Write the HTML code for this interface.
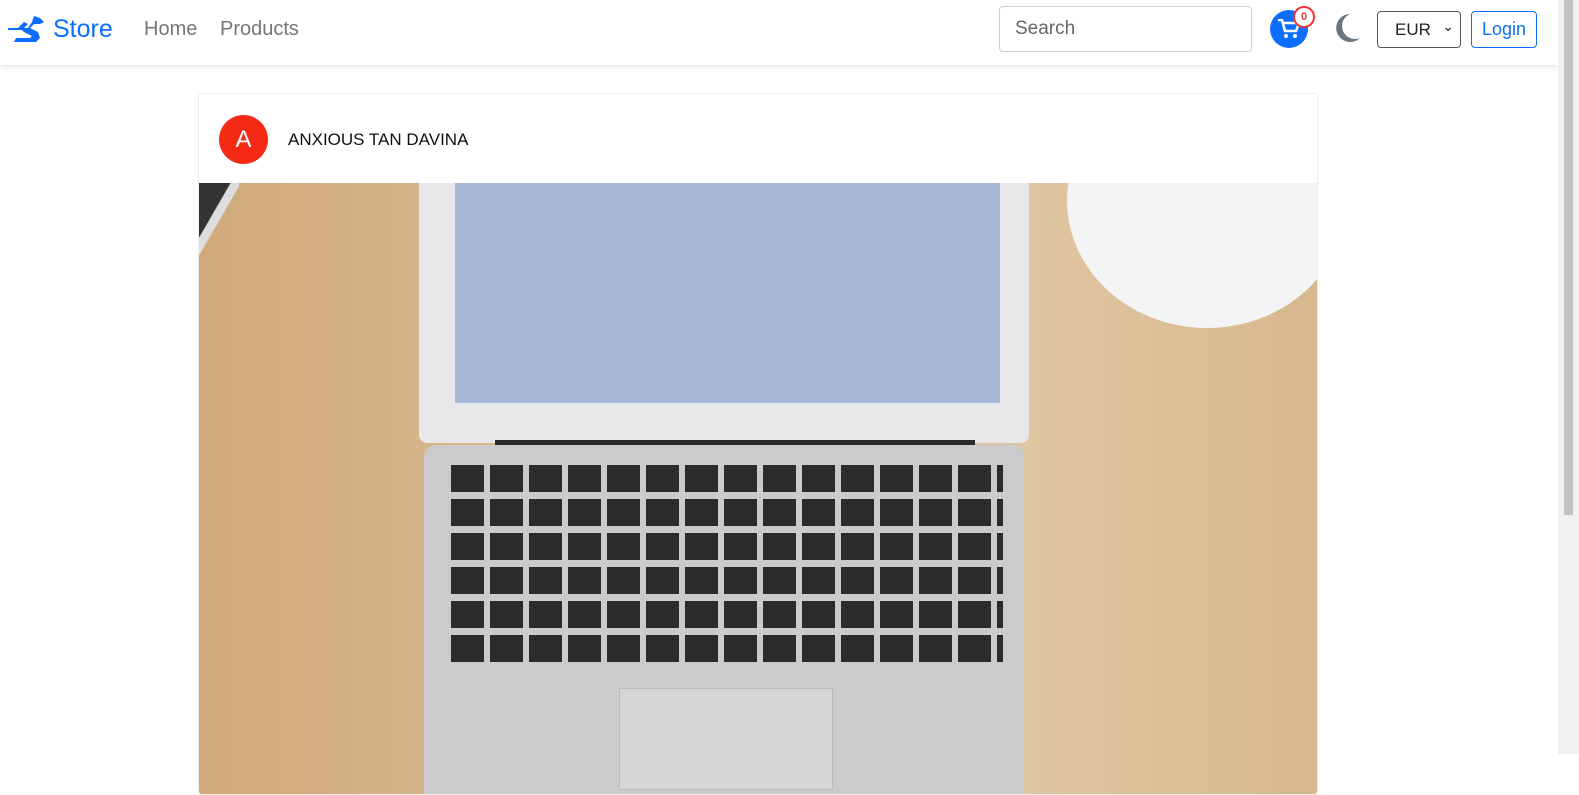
<!DOCTYPE html>
<html><head><style>
body{margin:0;width:1579px;height:754px;overflow:hidden;background:#fff;font-family:"Liberation Sans",sans-serif;position:relative}
.nav{position:absolute;left:0;top:0;width:1558px;height:65px;background:#fff;box-shadow:0 2px 4px rgba(0,0,0,.1)}
.sb{position:absolute;right:0;top:0;width:21px;height:754px;background:#f1f1f1}
.sb div{position:absolute;left:6px;top:0;width:9px;height:515px;background:#c1c1c1}
.brand{position:absolute;left:53px;top:15px;font-size:25px;color:#0d6efd}
.link{position:absolute;top:18px;font-size:20px;color:#777}
.search{position:absolute;left:999px;top:6px;width:253px;height:46px;border:1px solid #ccc;border-radius:4px;box-sizing:border-box;padding:11px 15px;font-size:19px;color:#666}
.cart{position:absolute;left:1270px;top:10px;width:38px;height:38px;border-radius:50%;background:#0d6efd}
.badge{position:absolute;left:1293px;top:6px;width:18px;height:18px;border-radius:50%;border:2px solid #e33;background:#fff;color:#e33;font-size:11px;text-align:center;line-height:18px;font-weight:bold}
.sel{position:absolute;left:1377px;top:11px;width:84px;height:37px;border:1px solid #555;border-radius:4px;box-sizing:border-box;font-size:17px;padding:8px 0 0 17px;color:#222}
.login{position:absolute;left:1471px;top:11px;width:66px;height:37px;border:1px solid #0d6efd;border-radius:4px;box-sizing:border-box;color:#0d6efd;font-size:18px;text-align:center;line-height:35px}
.card{position:absolute;left:198px;top:93px;width:1118px;height:700px;border:1px solid #eee;border-radius:4px;overflow:hidden}
.av{position:absolute;left:20px;top:21px;width:49px;height:49px;border-radius:50%;background:#f42a14;color:#fff;font-size:24px;text-align:center;line-height:49px}
.name{position:absolute;left:89px;top:36px;font-size:17px;color:#111}
.img{position:absolute;left:0;top:89px;width:1118px;height:620px;overflow:hidden;background:linear-gradient(90deg,#cfa97a,#dcbf98 40%,#e0c7a4 70%,#d8b88e)}
</style></head><body>
<div class="nav">
<svg style="position:absolute;left:8px;top:14px" width="40" height="30" viewBox="0 0 40 30"><path d="M0 14h10l6-6 4 2-4 4h4l4-6 2-6 6 2 4 4-4 2h-6l-4 4 8 4 2 6-4 4H6l2-4h14l2-2-8-4-2-2H0z" fill="#0d6efd"/></svg>
<div class="brand">Store</div>
<div class="link" style="left:144px">Home</div>
<div class="link" style="left:220px">Products</div>
<div class="search">Search</div>
<div class="cart"><svg style="position:absolute;left:8px;top:9px" width="22" height="20" viewBox="0 0 22 20"><path d="M0 1h4l3 11h11l3-8H6" fill="none" stroke="#fff" stroke-width="2.5"/><circle cx="8" cy="17" r="2" fill="#fff"/><circle cx="17" cy="17" r="2" fill="#fff"/></svg></div>
<div class="badge">0</div>
<svg style="position:absolute;left:1330px;top:12px" width="32" height="32" viewBox="0 0 32 32"><path d="M20 2A14 14 0 1 0 30 26 12 12 0 0 1 20 2z" fill="#6c757d"/></svg>
<div class="sel">EUR<span style="position:absolute;right:6px;top:6px;font-size:14px">&#8964;</span></div>
<div class="login">Login</div>
</div>
<div class="sb"><div></div></div>
<div class="card">
<div class="av">A</div><div class="name">ANXIOUS TAN DAVINA</div>
<div class="img">
<div style="position:absolute;left:0;top:0;width:40px;height:110px;background:linear-gradient(120deg,#333 30%,#ddd 31%,#ddd 40%,transparent 41%)"></div>
<div style="position:absolute;left:868px;top:-110px;width:280px;height:255px;border-radius:50%;background:#f4f4f4"></div>
<div style="position:absolute;left:220px;top:0;width:610px;height:260px;background:#e8e8ea;border-radius:0 0 8px 8px"></div>
<div style="position:absolute;left:256px;top:0;width:545px;height:220px;background:#a9b8d6"></div>
<div style="position:absolute;left:296px;top:257px;width:480px;height:20px;background:#2a2a2a"></div>
<div style="position:absolute;left:225px;top:262px;width:600px;height:370px;background:#cbcbcd;border-radius:12px"></div>
<div style="position:absolute;left:252px;top:282px;width:552px;height:200px;background:repeating-linear-gradient(90deg,#2b2b2b 0 33px,#cbcbcd 33px 39px);-webkit-mask:repeating-linear-gradient(#000 0 27px,transparent 27px 34px)"></div>
<div style="position:absolute;left:420px;top:505px;width:212px;height:100px;background:#d6d6d8;border:1px solid #bbb"></div>
</div>
</div>
</body></html>
